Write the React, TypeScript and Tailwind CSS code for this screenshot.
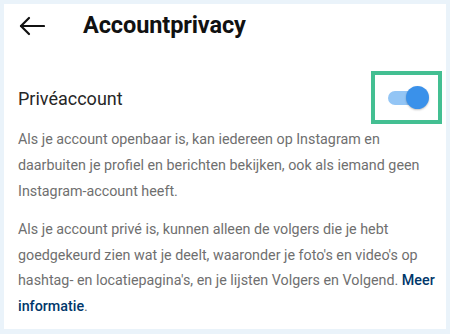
import React from "react";

export default function App() {
  return (
    <div className="w-[450px] h-[334px] bg-[#eaf3fa] p-[4px]" style={{ fontFamily: "Roboto, 'Liberation Sans', sans-serif" }}>
      <div className="w-[442px] h-[325px] bg-white flex flex-col">
        <div className="flex items-center h-[44px]">
          <svg width="26" height="20" viewBox="0 0 26 20" className="ml-[15px]" fill="none" stroke="#111" strokeWidth="2.2" strokeLinecap="round" strokeLinejoin="round">
            <path d="M25 10H2" />
            <path d="M10 2L2 10L10 18" />
          </svg>
          <div className="ml-[38px] text-[23.5px] font-bold text-[#111] tracking-[-0.1px]">Accountprivacy</div>
        </div>
        <div className="flex items-center justify-between mt-[23px] h-[53px]">
          <div className="ml-[14px] text-[18px] text-[#262626] mt-[2px]">Privéaccount</div>
          <div className="mr-[4px] w-[71px] h-[53px] border-[4px] border-[#43bf92] flex items-center justify-center">
            <div className="relative w-[44px] h-[24px] flex items-center">
              <div className="absolute left-[3px] w-[30px] h-[14px] rounded-full bg-[#93c5f5]" />
              <div className="absolute right-[0px] w-[23px] h-[23px] rounded-full bg-[#3a91ea] shadow-[0_1px_2px_rgba(0,0,0,0.25)]" />
            </div>
          </div>
        </div>
        <div className="pl-[14px] pr-[6px] text-[14.3px] text-[#6f6f6f] leading-[26px] mt-[2px]">
          <p>Als je account openbaar is, kan iedereen op Instagram en daarbuiten je profiel en berichten bekijken, ook als iemand geen Instagram-account heeft.</p>
          <p className="mt-[13px] leading-[25.5px]">
            Als je account privé is, kunnen alleen de volgers die je hebt goedgekeurd zien wat je deelt, waaronder je foto's en video's op hashtag- en locatiepagina's, en je lijsten Volgers en Volgend.{" "}
            <span className="text-[#00376b] font-medium">Meer informatie</span>.
          </p>
        </div>
      </div>
    </div>
  );
}
